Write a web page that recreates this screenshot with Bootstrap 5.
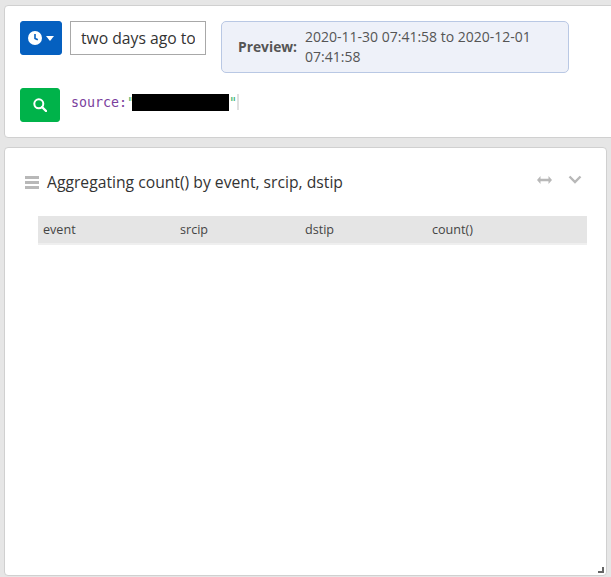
<!DOCTYPE html>
<html lang="en">
<head>
<meta charset="utf-8">
<title>Aggregation</title>
<link rel="stylesheet" href="https://cdn.jsdelivr.net/npm/bootstrap@5.3.0/dist/css/bootstrap.min.css">
<style>
html, body { height: 100%; }
body { background: #e6e6e6; font-family: "Open Sans", sans-serif; color: #333; overflow: hidden; width: 611px; height: 577px; padding: 5px 4px 0; }
.query-panel { height: 133px; margin-right: -12px; margin-bottom: 9px; border: 1px solid #d0d0d0; border-radius: 4px; background: #fff; padding: 15px; }
.top-line { height: 52px; margin-bottom: 15px; }
.time-btn { width: 42px; height: 34px; padding: 0; background: #0560c0; border: 1px solid #0560c0; border-radius: 3px; gap: 4px; }
.time-input { width: 136px; height: 34px; margin-left: 8px; margin-right: 15px; border: 1px solid #a8a8a8; border-radius: 0; padding: 0 10px; font-family: "Open Sans", sans-serif; font-size: 15.7px; line-height: 32px; color: #333; flex: none; }
.preview-box { width: 348px; height: 52px; background: #eef1f9; border: 1px solid #b9c8e4; border-radius: 5px; padding: 5px 16px; color: #555; font-size: 14px; }
.preview-label { font-weight: 700; font-size: 13.8px; margin-right: 8px; flex: none; }
.preview-value { line-height: 20px; }
.go-btn { width: 40px; height: 34px; padding: 0; background: #00b34a; border: 1px solid #00b34a; border-radius: 3px; }
.query-line { margin-left: 11px; margin-top: -4px; font-family: "DejaVu Sans Mono", monospace; font-size: 13.3px; line-height: 18px; }
.kw { color: #7a3e9d; }
.str { color: #3cb371; }
.redact { display: inline-block; width: 97px; height: 17px; margin-left: -3px; background: #000; vertical-align: -4px; }
.caret-mark { display: inline-block; width: 2px; height: 16px; margin-left: 0; background: #e0e0e0; vertical-align: -3px; }
.result-panel { width: 603px; height: 429px; border: 1px solid #d0d0d0; border-radius: 4px; background: #fff; padding: 0; }
.panel-head { height: 68px; padding: 22px 24px 0 20px; }
.menu-bars { width: 14px; height: 13px; margin-right: 8px; margin-top: 6px; flex: none; }
.panel-title { font-size: 15.7px; line-height: 24px; margin: 0; font-weight: 400; color: #333; }
.head-tools { gap: 16px; margin-top: 5px; }
.grid-wrap { margin: 0 19px 0 33px; }
.agg-table { width: 100%; table-layout: fixed; margin: 0; font-size: 12.6px; color: #444; }
.agg-table th { background: #e5e5e5; font-weight: 400; padding: 0 5px; height: 27px; line-height: 27px; border-bottom: 2px solid #efefef; color: #444; box-sizing: content-box; }
.agg-table th.c1 { width: 127px; }
.agg-table th.c2 { width: 115px; }
.agg-table th.c3 { width: 117px; }
.resize-mark { position: absolute; right: 2px; bottom: 2px; width: 6px; height: 6px; }
</style>
</head>
<body>
<div class="query-panel">
  <div class="d-flex align-items-start top-line">
    <button type="button" class="btn time-btn d-flex align-items-center justify-content-center" aria-label="Time range">
      <svg width="14" height="14" viewBox="0 0 14 14"><circle cx="7" cy="7" r="7" fill="#fff"/><path d="M7 3v4.400l2.800 1.400" fill="none" stroke="#0560c0" stroke-width="1.600"/></svg>
      <svg width="8" height="5" viewBox="0 0 8 5"><path d="M0 0h8L4 5z" fill="#fff"/></svg>
    </button>
    <input type="text" class="time-input" value="two days ago to now" aria-label="Time range">
    <div class="preview-box d-flex align-items-center">
      <span class="preview-label">Preview:</span>
      <span class="preview-value">2020-11-30 07:41:58 to 2020-12-01 07:41:58</span>
    </div>
  </div>
  <div class="d-flex align-items-center">
    <button type="button" class="btn go-btn d-flex align-items-center justify-content-center" aria-label="Search">
      <svg width="14" height="14" viewBox="0 0 14 14"><circle cx="5.800" cy="5.800" r="4.500" fill="none" stroke="#fff" stroke-width="2"/><path d="M9 9l4 4" stroke="#fff" stroke-width="2.400" stroke-linecap="round"/></svg>
    </button>
    <div class="query-line"><span class="kw">source:</span><span class="str">"</span><span class="redact"></span><span class="str">"</span><span class="caret-mark"></span></div>
  </div>
</div>
<div class="card result-panel position-relative">
  <div class="panel-head d-flex align-items-start">
    <svg class="menu-bars" viewBox="0 0 14 13"><path d="M0 0h14v3H0zM0 5h14v3H0zM0 10h14v3H0z" fill="#b8b8b8"/></svg>
    <h2 class="panel-title flex-grow-1">Aggregating count() by event, srcip, dstip</h2>
    <div class="head-tools d-flex align-items-center">
      <svg width="15" height="8" viewBox="0 0 15 8"><path d="M0 4l3.500-4v2.800h8V0L15 4l-3.500 4V5.200h-8V8z" fill="#b8b8b8"/></svg>
      <svg width="14" height="9" viewBox="0 0 14 9"><path d="M1.500 1.500L7 7l5.500-5.500" fill="none" stroke="#b8b8b8" stroke-width="2.400"/></svg>
    </div>
  </div>
  <div class="grid-wrap">
    <table class="table agg-table">
      <thead><tr><th class="c1">event</th><th class="c2">srcip</th><th class="c3">dstip</th><th>count()</th></tr></thead>
    </table>
  </div>
  <svg class="resize-mark" viewBox="0 0 6 6"><path d="M4 0h2v6H0V4h4z" fill="#666"/></svg>
</div>
<script src="https://cdn.jsdelivr.net/npm/bootstrap@5.3.0/dist/js/bootstrap.bundle.min.js"></script>
</body>
</html>
